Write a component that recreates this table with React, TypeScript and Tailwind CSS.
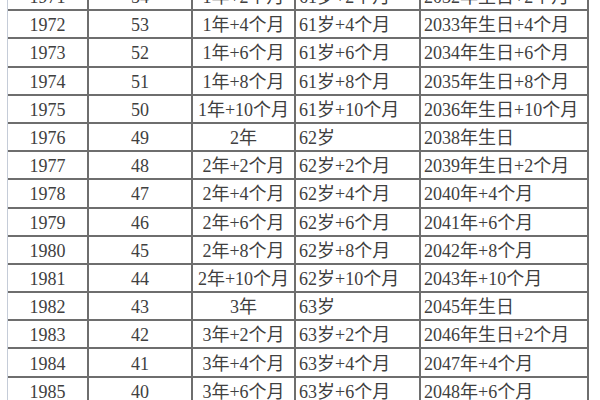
const rows: [string, string, string, string, string][] = [
  ["1971", "54", "1年+2个月", "61岁+2个月", "2032年生日+2个月"],
  ["1972", "53", "1年+4个月", "61岁+4个月", "2033年生日+4个月"],
  ["1973", "52", "1年+6个月", "61岁+6个月", "2034年生日+6个月"],
  ["1974", "51", "1年+8个月", "61岁+8个月", "2035年生日+8个月"],
  ["1975", "50", "1年+10个月", "61岁+10个月", "2036年生日+10个月"],
  ["1976", "49", "2年", "62岁", "2038年生日"],
  ["1977", "48", "2年+2个月", "62岁+2个月", "2039年生日+2个月"],
  ["1978", "47", "2年+4个月", "62岁+4个月", "2040年+4个月"],
  ["1979", "46", "2年+6个月", "62岁+6个月", "2041年+6个月"],
  ["1980", "45", "2年+8个月", "62岁+8个月", "2042年+8个月"],
  ["1981", "44", "2年+10个月", "62岁+10个月", "2043年+10个月"],
  ["1982", "43", "3年", "63岁", "2045年生日"],
  ["1983", "42", "3年+2个月", "63岁+2个月", "2046年生日+2个月"],
  ["1984", "41", "3年+4个月", "63岁+4个月", "2047年+4个月"],
  ["1985", "40", "3年+6个月", "63岁+6个月", "2048年+6个月"],
]

const cell = "flex items-center pt-[2px] border-b-2 border-r-2 border-[#6e6e6e] whitespace-nowrap overflow-hidden"

export default function App() {
  return (
    <div
      className="w-[600px] h-[400px] overflow-hidden bg-white text-[#404040] text-[18px] leading-none"
      style={{ fontFamily: '"Liberation Serif", "Noto Sans CJK SC", serif' }}
    >
      <div className="ml-[7px] mt-[-17px] w-[582px] border-l border-[#c5ccd8] grid grid-cols-[81px_104px_103px_125px_168px] auto-rows-[28.2px]">
        {rows.map((r) => (
          <div key={r[0]} className="contents">
            <div className={`${cell} justify-center`}>{r[0]}</div>
            <div className={`${cell} justify-center`}>{r[1]}</div>
            <div className={`${cell} justify-center`}>{r[2]}</div>
            <div className={`${cell} pl-[3px]`}>{r[3]}</div>
            <div className={`${cell} pl-[3px]`}>{r[4]}</div>
          </div>
        ))}
      </div>
    </div>
  )
}
